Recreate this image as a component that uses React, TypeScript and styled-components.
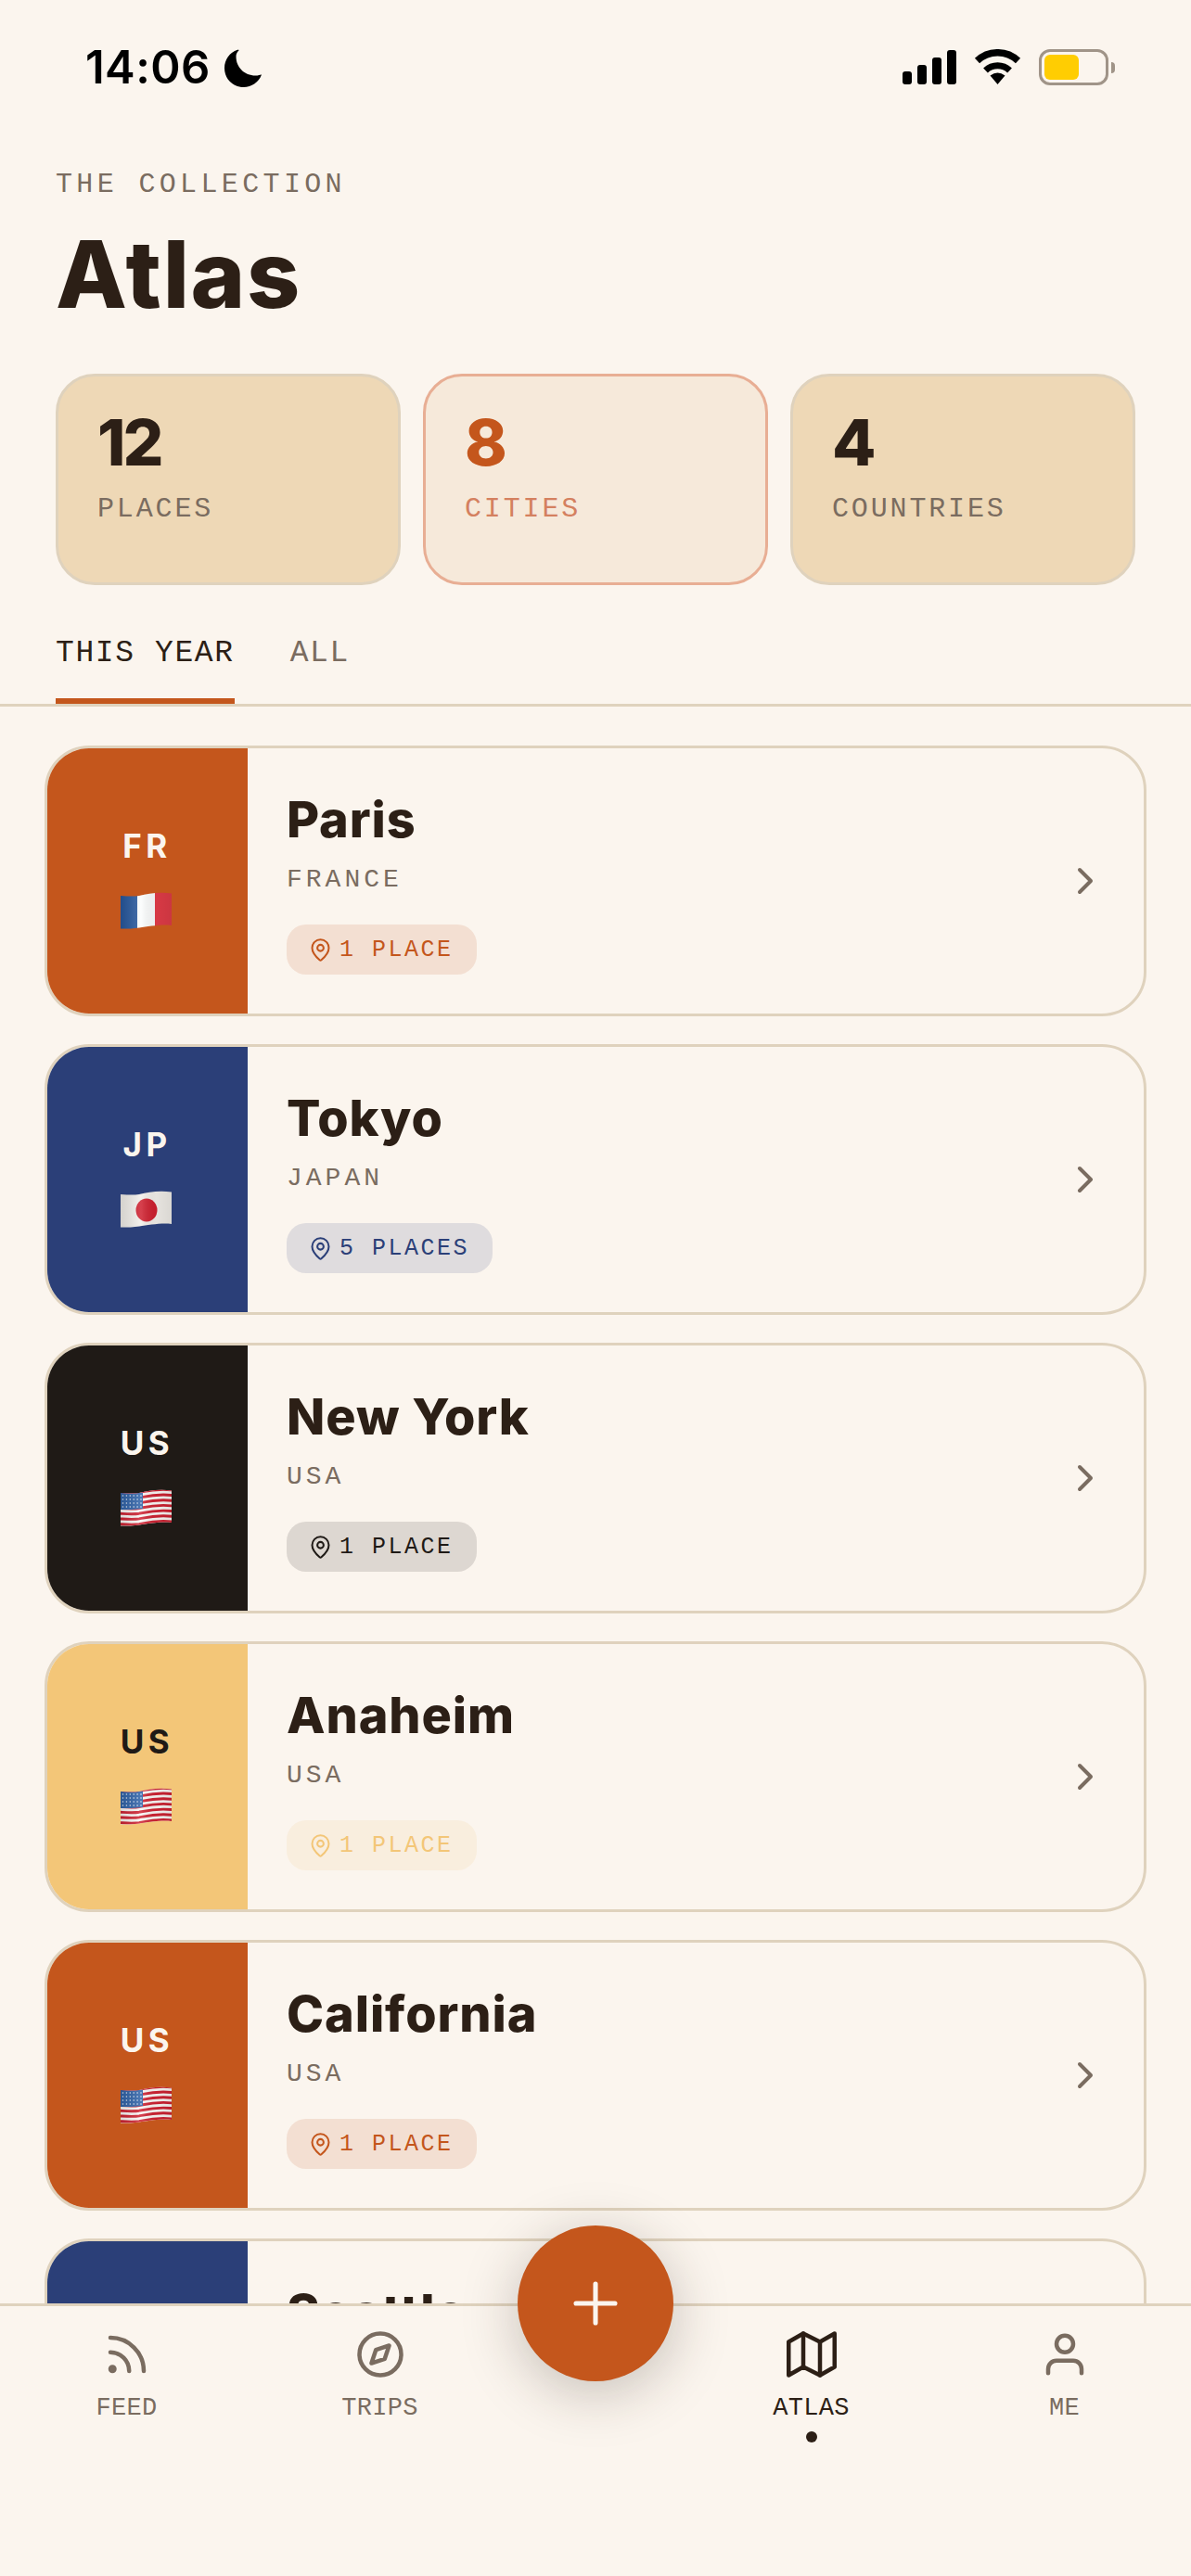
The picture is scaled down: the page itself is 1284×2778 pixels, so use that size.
import React from "react";
import styled, { createGlobalStyle } from "styled-components";
import { FiChevronRight, FiCompass, FiMap, FiRss, FiUser, FiPlus } from "react-icons/fi";
import { MapPin } from "lucide-react";

const INK = "#2c1f16";
const MUTED = "#7a6c60";
const CREAM = "#fbf5ee";
const RUST = "#c4561c";
const LINE = "#dfd2bd";
const MONO = `"Liberation Mono", "DejaVu Sans Mono", monospace`;
const SANS = `Inter, "Liberation Sans", sans-serif`;

const Global = createGlobalStyle`
  html, body { margin: 0; padding: 0; background: ${CREAM}; }
  * { box-sizing: border-box; }
`;

const Screen = styled.div`
  position: relative; width: 1284px; height: 2778px; background: ${CREAM};
  display: flex; flex-direction: column; overflow: hidden; font-family: ${SANS}; color: ${INK};
`;
const StatusBar = styled.div`
  flex: none; height: 150px; padding: 53px 82px 0 92px;
  display: flex; justify-content: space-between; align-items: flex-start;
`;
const TimeGroup = styled.div`display: flex; align-items: center; gap: 15px; height: 40px;`;
const Time = styled.span`
  font: 600 49px/40px ${SANS}; color: #000; letter-spacing: 0.4px;
`;
const StatusIcons = styled.div`display: flex; align-items: flex-start; gap: 19px;`;
const Signal = styled.div`display: flex; align-items: flex-end; gap: 6px; height: 38px;`;
const SignalBar = styled.span<{ $h: number }>`
  width: 10px; height: ${(p) => p.$h}px; background: #000; border-radius: 3px;
`;
const BatteryWrap = styled.div`display: flex; align-items: center; gap: 3px;`;
const BatteryBody = styled.div`
  width: 75px; height: 39px; border: 3px solid #a09488; border-radius: 12px; padding: 3px;
  display: flex;
`;
const BatteryFill = styled.div`width: 37px; height: 100%; background: #ffcd02; border-radius: 6px;`;
const BatteryTip = styled.div`width: 4px; height: 12px; background: #a09488; border-radius: 0 6px 6px 0;`;

const Header = styled.header`flex: none; padding: 29px 60px 0;`;
const Eyebrow = styled.div`
  font: 400 30px/40px ${MONO}; letter-spacing: 4.35px; color: ${MUTED};
`;
const Title = styled.h1`
  margin: 22px 0 0; font: 800 100px/110px ${SANS}; letter-spacing: 1.6px; color: ${INK};
`;
const Stats = styled.div`
  flex: none; margin: 52px 60px 0; display: grid; grid-template-columns: repeat(3, 1fr); gap: 24px;
`;
const StatCard = styled.div<{ $active?: boolean }>`
  height: 228px; border-radius: 42px; padding: 35px 42px 0;
  border: 3px solid ${(p) => (p.$active ? "#e8ae94" : LINE)};
  background: ${(p) => (p.$active ? "#f6e9da" : "#eed8b6")};
`;
const StatValue = styled.div<{ $active?: boolean }>`
  font: 800 69px/72px ${SANS}; letter-spacing: -3px;
  color: ${(p) => (p.$active ? RUST : INK)};
`;
const StatLabel = styled.div<{ $active?: boolean }>`
  margin-top: 16px; font: 400 30px/40px ${MONO}; letter-spacing: 2.85px;
  color: ${(p) => (p.$active ? "#d4805f" : MUTED)};
`;
const Tabs = styled.nav`
  flex: none; margin-top: 54px; padding: 0 60px; display: flex; gap: 60px;
  border-bottom: 3px solid ${LINE};
`;
const Tab = styled.div<{ $active?: boolean }>`
  font: 400 33px/40px ${MONO}; letter-spacing: 1.6px; padding-bottom: 28px;
  color: ${(p) => (p.$active ? INK : MUTED)};
  border-bottom: 6px solid ${(p) => (p.$active ? RUST : "transparent")};
`;
const List = styled.div`
  flex: 1; min-height: 0; overflow: hidden; padding: 42px 48px 0;
  display: flex; flex-direction: column; gap: 30px;
`;
const Card = styled.article`
  flex: none; height: 292px; border: 3px solid ${LINE}; border-radius: 48px; overflow: hidden;
  display: flex; align-items: stretch; background: ${CREAM};
`;
const Strip = styled.div<{ $bg: string; $fg: string }>`
  flex: none; width: 216px; background: ${(p) => p.$bg}; color: ${(p) => p.$fg};
  display: flex; flex-direction: column; align-items: center; padding-top: 85px; gap: 30px;
`;
const Code = styled.div`
  font: 700 35px/40px ${SANS}; letter-spacing: 4.5px; margin-right: 1px;
`;
const FlagSvg = styled.svg`display: block; width: 55px; height: 40px; margin-right: 3px;`;
const Body = styled.div`flex: 1; padding: 47px 0 0 42px; min-width: 0;`;
const CityName = styled.h2`
  margin: 0; font: 800 54px/60px ${SANS}; letter-spacing: 0.9px; color: ${INK};
`;
const Country = styled.div`
  margin-top: 17px; font: 400 28px/36px ${MONO}; letter-spacing: 4px; color: ${MUTED};
`;
const Pill = styled.div<{ $c: string }>`
  margin-top: 30px; display: inline-flex; align-items: center; gap: 7px; height: 54px;
  padding: 0 25px 0 23px; border-radius: 21px; color: ${(p) => p.$c}; background: ${(p) => p.$c}22;
  font: 400 25px/1 ${MONO}; letter-spacing: 2.5px;
`;
const Chevron = styled.div`
  flex: none; align-self: center; display: flex; margin-right: 39px; color: ${MUTED};
`;
const BottomNav = styled.footer`
  position: relative; flex: none; height: 294px; background: ${CREAM}; border-top: 3px solid ${LINE};
  padding-top: 25px; display: grid; grid-template-columns: 273px 273px 192px 273px 273px;
`;
const NavItem = styled.div<{ $active?: boolean }>`
  display: flex; flex-direction: column; align-items: center; color: ${(p) => (p.$active ? INK : MUTED)};
`;
const NavLabel = styled.div`margin-top: 13px; font: 400 27px/36px ${MONO}; letter-spacing: 0.3px;`;
const NavDot = styled.span`margin-top: 7px; width: 12px; height: 12px; border-radius: 50%; background: ${INK};`;
const Fab = styled.button`
  position: absolute; left: 558px; top: -87px; width: 168px; height: 168px; border: 0; border-radius: 50%;
  background: ${RUST}; color: ${CREAM}; display: flex; align-items: center; justify-content: center;
  box-shadow: 0 12px 60px rgba(44, 31, 22, 0.25); padding: 0;
`;

const WAVE = (y: number) =>
  `M-1 ${y + 3} C8 ${y + 3.5} 14 ${y + 4} 20 ${y + 3} C30 ${y + 1} 40 ${y - 1.5} 56 ${y + 0.5}`;
const OUTLINE = "M0 4 C8 4.5 14 5 20 4 C30 2 40 -0.5 55 1.5 L55 36 C45 34.5 30 37 20 38.5 C14 39.5 8 39.5 0 39.5 Z";

const Flag = ({ code, id }: { code: string; id: string }) => (
  <FlagSvg viewBox="0 0 55 40" aria-hidden>
    <defs>
      <clipPath id={`c${id}`}><path d={OUTLINE} /></clipPath>
      <linearGradient id={`s${id}`} x1="0" x2="1" y1="0" y2="0">
        <stop offset="0" stopColor="#000" stopOpacity="0.12" />
        <stop offset="0.4" stopColor="#fff" stopOpacity="0.15" />
        <stop offset="0.7" stopColor="#000" stopOpacity="0.05" />
        <stop offset="1" stopColor="#000" stopOpacity="0.1" />
      </linearGradient>
    </defs>
    <g clipPath={`url(#c${id})`}>
      {code === "FR" && (
        <>
          <rect x="0" y="0" width="18" height="40" fill="#27589e" />
          <rect x="18" y="0" width="19" height="40" fill="#fbfdfd" />
          <rect x="37" y="0" width="18" height="40" fill="#e23c48" />
        </>
      )}
      {code === "JP" && (
        <>
          <rect width="55" height="40" fill="#f2efea" />
          <ellipse cx="28" cy="21" rx="11.5" ry="12.5" fill="#cf1f2e" />
        </>
      )}
      {code === "US" && (
        <>
          <rect width="55" height="40" fill="#fbf8f6" />
          {[0, 1, 2, 3, 4, 5, 6].map((i) => (
            <path key={i} d={WAVE(i * 5.7 + 0.4)} fill="none" stroke="#cf2232" strokeWidth="2.9" />
          ))}
          <path d="M0 4 C8 4.5 14 5 24 3.4 V21 C16 22 8 22 0 22 Z" fill="#2f62a8" />
          {[0, 1, 2, 3].map((r) =>
            [0, 1, 2, 3, 4, 5].map((c) => (
              <circle key={`${r}-${c}`} cx={2.5 + c * 3.9} cy={7 + r * 4} r="0.8" fill="#dfe8f4" />
            ))
          )}
        </>
      )}
      <rect width="55" height="40" fill={`url(#s${id})`} />
    </g>
  </FlagSvg>
);

const Moon = () => (
  <svg width="41" height="41" viewBox="0 0 41 41" aria-hidden>
    <path d="M15 0.5 C6 3 0 11 0 20.5 C0 32 9 41 20.5 41 C29.5 41 37 35.5 40 27.5 C39 27 37 28.5 33.5 28.5 C21.5 28.5 12.5 19.5 12.5 8 C12.5 5 14 2.5 15.5 1.5 Z" fill="#000" />
  </svg>
);
const Wifi = () => (
  <svg width="51" height="38" viewBox="0 0 51 38" aria-hidden>
    <path d="M3.5 12.5 A32 32 0 0 1 47.5 12.5" fill="none" stroke="#000" strokeWidth="7.5" />
    <path d="M12.5 23 A19 19 0 0 1 38.5 23" fill="none" stroke="#000" strokeWidth="7" />
    <path d="M25.5 38 L17.5 28.5 Q25.5 22.5 33.5 28.5 Z" fill="#000" />
  </svg>
);

const CITIES = [
  { name: "Paris", country: "FRANCE", code: "FR", color: RUST, fg: CREAM, count: "1 PLACE" },
  { name: "Tokyo", country: "JAPAN", code: "JP", color: "#2b3f78", fg: CREAM, count: "5 PLACES" },
  { name: "New York", country: "USA", code: "US", color: "#1f1a16", fg: CREAM, count: "1 PLACE" },
  { name: "Anaheim", country: "USA", code: "US", color: "#f3c678", fg: "#1f1a16", count: "1 PLACE" },
  { name: "California", country: "USA", code: "US", color: RUST, fg: CREAM, count: "1 PLACE" },
  { name: "Seattle", country: "USA", code: "US", color: "#2b3f78", fg: CREAM, count: "1 PLACE" },
];
const STATS = [
  { value: "12", label: "PLACES" },
  { value: "8", label: "CITIES", active: true },
  { value: "4", label: "COUNTRIES" },
];

export default function App() {
  return (
    <Screen>
      <Global />
      <StatusBar>
        <TimeGroup><Time>14:06</Time><Moon /></TimeGroup>
        <StatusIcons>
          <Signal>
            {[14, 21, 29, 37].map((h) => <SignalBar key={h} $h={h} />)}
          </Signal>
          <Wifi />
          <BatteryWrap>
            <BatteryBody><BatteryFill /></BatteryBody>
            <BatteryTip />
          </BatteryWrap>
        </StatusIcons>
      </StatusBar>
      <Header>
        <Eyebrow>THE COLLECTION</Eyebrow>
        <Title>Atlas</Title>
      </Header>
      <Stats>
        {STATS.map((s) => (
          <StatCard key={s.label} $active={s.active}>
            <StatValue $active={s.active}>{s.value}</StatValue>
            <StatLabel $active={s.active}>{s.label}</StatLabel>
          </StatCard>
        ))}
      </Stats>
      <Tabs>
        <Tab $active>THIS YEAR</Tab>
        <Tab>ALL</Tab>
      </Tabs>
      <List>
        {CITIES.map((c, i) => (
          <Card key={c.name}>
            <Strip $bg={c.color} $fg={c.fg}>
              <Code>{c.code}</Code>
              <Flag code={c.code} id={String(i)} />
            </Strip>
            <Body>
              <CityName>{c.name}</CityName>
              <Country>{c.country}</Country>
              <div>
                <Pill $c={c.color}>
                  <MapPin size={27} strokeWidth={1.8} />
                  <span>{c.count}</span>
                </Pill>
              </div>
            </Body>
            <Chevron><FiChevronRight size={48} strokeWidth={2} /></Chevron>
          </Card>
        ))}
      </List>
      <BottomNav>
        <NavItem><FiRss size={54} strokeWidth={2} /><NavLabel>FEED</NavLabel></NavItem>
        <NavItem><FiCompass size={54} strokeWidth={2} /><NavLabel>TRIPS</NavLabel></NavItem>
        <div />
        <NavItem $active><FiMap size={54} strokeWidth={2} /><NavLabel>ATLAS</NavLabel><NavDot /></NavItem>
        <NavItem><FiUser size={54} strokeWidth={2} /><NavLabel>ME</NavLabel></NavItem>
        <Fab aria-label="Add"><FiPlus size={72} strokeWidth={1.7} /></Fab>
      </BottomNav>
    </Screen>
  );
}
